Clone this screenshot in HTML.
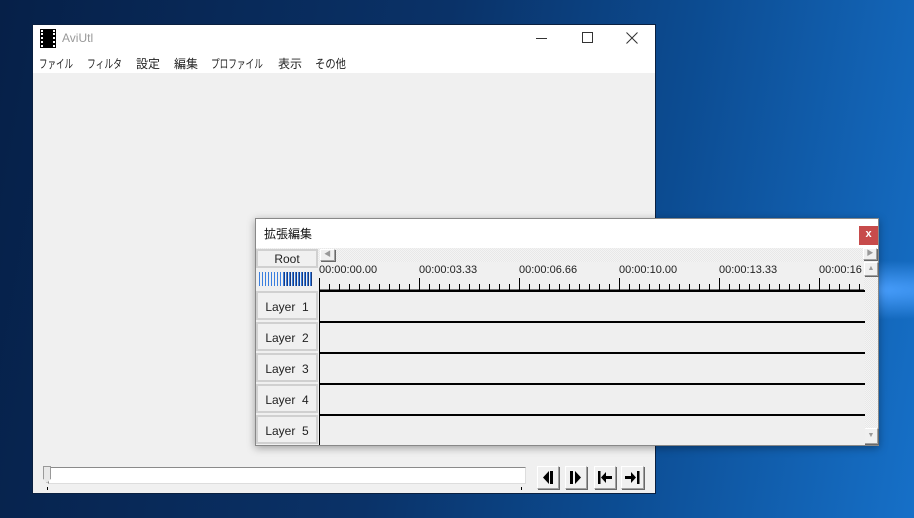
<!DOCTYPE html>
<html><head><meta charset="utf-8"><style>
*{margin:0;padding:0;box-sizing:border-box}
body{width:914px;height:518px;overflow:hidden;position:relative;font-family:"Liberation Sans","Noto Sans CJK JP",sans-serif;
background:linear-gradient(100deg,#062048 0%,#0a3268 45%,#0c4c92 70%,#1670c8 100%);}
.abs{position:absolute}
.jp{font-family:"Noto Sans CJK JP",sans-serif}
.m{position:absolute;top:30px;font-size:12px;color:#222;font-family:"Noto Sans CJK JP",sans-serif;white-space:nowrap;transform-origin:0 0}
.btn{position:absolute;background:#f0f0f0;border:1px solid;border-color:#fff #a0a0a0 #a0a0a0 #fff;box-shadow:1px 1px 0 #696969}
.layer{position:absolute;left:256px;width:62px;height:29px;background:#f0f0f0;border:2px solid #d0d0d0;font-size:12px;color:#222;text-align:center;line-height:28px}
.row{position:absolute;left:319px;width:546px;height:31px;background:#efefef;border-top:2px solid #000;border-left:1px solid #000}
</style></head><body>
<div class="abs" style="left:640px;top:260px;width:274px;height:60px;background:radial-gradient(ellipse at 80% 50%,#4aa0ff 0%,rgba(30,120,220,0) 70%)"></div>
<!-- main window -->
<div class="abs" style="left:32px;top:24px;width:624px;height:470px;background:#f0f0f0;border:1px solid #0a2040">
 <div class="abs" style="left:0;top:0;width:622px;height:48px;background:#fff"></div>
 <div class="abs" style="left:8px;top:5px;width:14px;height:17px;background:#000;border-left:2px dotted #fff;border-right:2px dotted #fff;outline:1px solid #000"></div>
 <div class="abs" style="left:29px;top:6px;font-size:12px;color:#999">AviUtl</div>
 <div class="abs" style="left:503px;top:13px;width:11px;height:1px;background:#333"></div>
 <div class="abs" style="left:549px;top:7px;width:11px;height:11px;border:1px solid #333"></div>
 <svg class="abs" style="left:593px;top:7px" width="12" height="12"><path d="M0.5 0.5L11.5 11.5M11.5 0.5L0.5 11.5" stroke="#333" stroke-width="1"/></svg>
 <span class="m" style="left:6px;transform:scaleX(0.71)">ファイル</span>
 <span class="m" style="left:54px;transform:scaleX(0.73)">フィルタ</span>
 <span class="m" style="left:103px">設定</span>
 <span class="m" style="left:141px">編集</span>
 <span class="m" style="left:178px;transform:scaleX(0.72)">プロファイル</span>
 <span class="m" style="left:245px">表示</span>
 <span class="m" style="left:282px;transform:scaleX(0.86)">その他</span>
 <div class="abs" style="left:15px;top:442px;width:478px;height:17px;background:#fff;border:1px solid #8a8a8a;border-right-color:#ddd;border-bottom-color:#ddd"></div>
 <div class="abs" style="left:10px;top:441px;width:8px;height:17px;background:#e8e8e8;border:1px solid #999;clip-path:polygon(0 0,100% 0,100% 75%,50% 100%,0 75%)"></div>
 <div class="abs" style="left:14px;top:462px;width:1px;height:3px;background:#000"></div>
 <div class="abs" style="left:488px;top:462px;width:1px;height:3px;background:#000"></div>
 <div class="btn" style="left:504px;top:441px;width:22px;height:23px"><svg width="20" height="21"><path d="M5 10.5L11 4V17Z" fill="#000"/><rect x="12" y="4" width="3" height="13"/></svg></div>
 <div class="btn" style="left:532px;top:441px;width:22px;height:23px"><svg width="20" height="21"><rect x="4" y="4" width="3" height="13"/><path d="M9 4L15 10.5 9 17Z"/></svg></div>
 <div class="btn" style="left:561px;top:441px;width:22px;height:23px"><svg width="20" height="21"><rect x="3" y="4" width="2.5" height="13"/><path d="M6 10.5L11 5V9H17V12H11V16Z"/></svg></div>
 <div class="btn" style="left:588px;top:441px;width:23px;height:23px"><svg width="21" height="21"><rect x="15" y="4" width="2.5" height="13"/><path d="M14 10.5L9 5V9H3V12H9V16Z"/></svg></div>
</div>
<!-- extension window -->
<div class="abs" style="left:255px;top:218px;width:624px;height:228px;background:#f0f0f0;border:1px solid #888;box-shadow:0 2px 8px rgba(0,0,0,.35)">
 <div class="abs" style="left:0;top:0;width:622px;height:30px;background:#fff"></div>
 <div class="abs jp" style="left:8px;top:6px;font-size:12px;color:#111">拡張編集</div>
 <div class="abs" style="left:603px;top:7px;width:19px;height:19px;background:#c74b4b;color:#fff;font-size:11px;text-align:center;line-height:17px;font-weight:bold">x</div>
</div>
<div class="abs" style="left:256px;top:248px;width:608px;height:14px;background:repeating-conic-gradient(#f4f4f4 0 25%,#e8e8e8 0 50%) 0 0/2px 2px"></div>
<div class="btn" style="left:320px;top:249px;width:15px;height:12px;font-size:7px;color:#999;text-align:center;line-height:10px">◀</div>
<div class="btn" style="left:863px;top:248px;width:14px;height:12px;font-size:7px;color:#999;text-align:center;line-height:10px">▶</div>
<div class="abs" style="left:864px;top:262px;width:14px;height:182px;background:repeating-conic-gradient(#f4f4f4 0 25%,#e8e8e8 0 50%) 0 0/2px 2px"></div>
<div class="btn" style="left:864px;top:262px;width:14px;height:14px;font-size:7px;color:#999;text-align:center;line-height:12px">▲</div>
<div class="btn" style="left:864px;top:428px;width:14px;height:16px;font-size:7px;color:#999;text-align:center;line-height:14px">▼</div>
<div class="layer" style="top:249px;height:19px;line-height:16px">Root</div>
<div class="abs" style="left:259px;top:272px;width:53px;height:14px;background:repeating-linear-gradient(90deg,#3a7fe0 0 1px,transparent 1px 3px);"></div>
<div class="abs" style="left:284px;top:272px;width:28px;height:14px;background:repeating-linear-gradient(90deg,#1a3a7a 0 1px,transparent 1px 3px);"></div>
<div class="abs" style="left:319px;top:262px;width:545px;height:29px;font-size:11px;color:#222">
 <span class="abs" style="left:0;top:2px">00:00:00.00</span>
 <span class="abs" style="left:100px;top:2px">00:00:03.33</span>
 <span class="abs" style="left:200px;top:2px">00:00:06.66</span>
 <span class="abs" style="left:300px;top:2px">00:00:10.00</span>
 <span class="abs" style="left:400px;top:2px">00:00:13.33</span>
 <span class="abs" style="left:500px;top:2px">00:00:16</span>
 <svg class="abs" style="left:0;top:0" width="545" height="29">
  <line x1="0" y1="28" x2="545" y2="28" stroke="#000"/>
  <path d="M0.5 16V28M100.5 16V28M200.5 16V28M300.5 16V28M400.5 16V28M500.5 16V28" stroke="#000"/>
  <path d="M10.5 22V28M20.5 22V28M30.5 22V28M40.5 22V28M50.5 22V28M60.5 22V28M70.5 22V28M80.5 22V28M90.5 22V28M110.5 22V28M120.5 22V28M130.5 22V28M140.5 22V28M150.5 22V28M160.5 22V28M170.5 22V28M180.5 22V28M190.5 22V28M210.5 22V28M220.5 22V28M230.5 22V28M240.5 22V28M250.5 22V28M260.5 22V28M270.5 22V28M280.5 22V28M290.5 22V28M310.5 22V28M320.5 22V28M330.5 22V28M340.5 22V28M350.5 22V28M360.5 22V28M370.5 22V28M380.5 22V28M390.5 22V28M410.5 22V28M420.5 22V28M430.5 22V28M440.5 22V28M450.5 22V28M460.5 22V28M470.5 22V28M480.5 22V28M490.5 22V28M510.5 22V28M520.5 22V28M530.5 22V28M540.5 22V28" stroke="#000"/>
 </svg>
</div>
<div class="layer" style="top:291px">Layer&nbsp; 1</div>
<div class="layer" style="top:322px">Layer&nbsp; 2</div>
<div class="layer" style="top:353px">Layer&nbsp; 3</div>
<div class="layer" style="top:384px">Layer&nbsp; 4</div>
<div class="layer" style="top:415px">Layer&nbsp; 5</div>
<div class="row" style="top:290px"></div>
<div class="row" style="top:321px"></div>
<div class="row" style="top:352px"></div>
<div class="row" style="top:383px"></div>
<div class="row" style="top:414px;height:31px"></div>
</body></html>
